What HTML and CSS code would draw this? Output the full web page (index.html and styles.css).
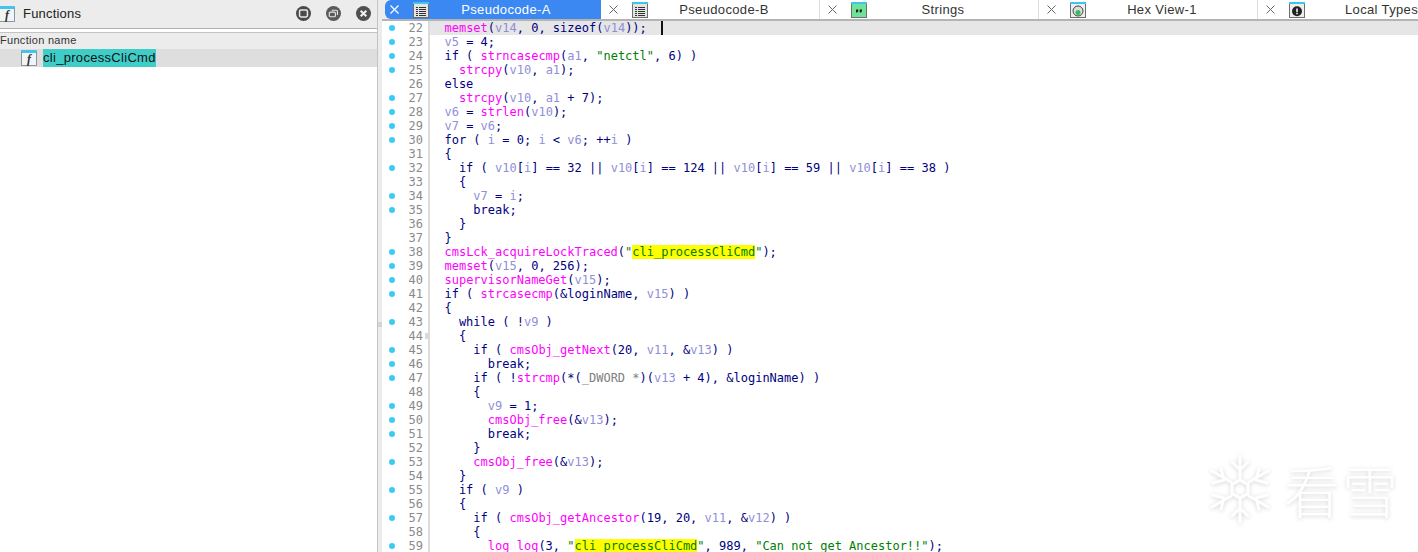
FILE: index.html
```html
<!DOCTYPE html>
<html lang="en">
<head>
<meta charset="utf-8">
<title>Pseudocode-A</title>
<link rel="stylesheet" href="styles.css">
</head>
<body>
<div class="app">
  <aside class="side">
    <header class="side-head">
      <span class="fn-icon fn-icon-big"><i>f</i></span>
      <span class="side-title">Functions</span>
      <span class="side-btns">
        <svg width="15" height="15" viewBox="0 0 16 16"><circle cx="8" cy="8" r="8" fill="#4a4a4a"/><rect x="3.8" y="4.300" width="8.400" height="7.400" rx="1.500" fill="none" stroke="#e8e8e8" stroke-width="1.600"/></svg>
        <svg width="15" height="15" viewBox="0 0 16 16"><circle cx="8" cy="8" r="8" fill="#5a5a5a"/><rect x="3.500" y="6.500" width="6.500" height="5" rx="1.200" fill="none" stroke="#e8e8e8" stroke-width="1.200"/><path d="M6 4.500h5a1.200 1.200 0 0 1 1.200 1.200v3.800" fill="none" stroke="#e8e8e8" stroke-width="1.200"/></svg>
        <svg width="15" height="15" viewBox="0 0 16 16"><circle cx="8" cy="8" r="8" fill="#4f4f4f"/><path d="M5 5l6 6M11 5l-6 6" stroke="#f0f0f0" stroke-width="2.200"/></svg>
      </span>
    </header>
    <div class="col-head">Function name</div>
    <div class="fn-row">
      <span class="fn-icon"><i>f</i></span>
      <span class="fn-name">cli_processCliCmd</span>
    </div>
  </aside>
  <div class="splitter"><span class="grip"></span></div>
  <main class="main">
    <nav class="tabs">
      <div class="tab tab-active">
        <svg class="tab-x" width="11" height="11" viewBox="0 0 11 11"><path d="M1.500 1.500l8 8M9.500 1.500l-8 8" stroke="#fff" stroke-width="1.200"/></svg>
        <svg class="tab-ic" width="16" height="16" viewBox="0 0 16 16" shape-rendering="crispEdges"><rect x=".5" y=".5" width="15" height="15" fill="#e4e4e4" stroke="#6f6f6f"/><rect width="16" height="2" fill="#3cc6ee"/><path d="M3 5.500h2M3 7.500h2M3 9.500h2M3 11.500h2M3 13.500h2M6 5.500h7M6 7.500h7M6 9.500h7M6 11.500h7M6 13.500h7" stroke="#333"/></svg>
        <span class="tab-label">Pseudocode-A</span>
      </div>
      <div class="tab">
        <svg class="tab-x" width="11" height="11" viewBox="0 0 11 11"><path d="M1.500 1.500l8 8M9.500 1.500l-8 8" stroke="#666" stroke-width="1"/></svg>
        <svg class="tab-ic" width="16" height="16" viewBox="0 0 16 16" shape-rendering="crispEdges"><rect x=".5" y=".5" width="15" height="15" fill="#e4e4e4" stroke="#6f6f6f"/><rect width="16" height="2" fill="#3cc6ee"/><path d="M3 5.500h2M3 7.500h2M3 9.500h2M3 11.500h2M3 13.500h2M6 5.500h7M6 7.500h7M6 9.500h7M6 11.500h7M6 13.500h7" stroke="#333"/></svg>
        <span class="tab-label">Pseudocode-B</span>
      </div>
      <div class="tab">
        <svg class="tab-x" width="11" height="11" viewBox="0 0 11 11"><path d="M1.500 1.500l8 8M9.500 1.500l-8 8" stroke="#666" stroke-width="1"/></svg>
        <svg class="tab-ic" width="16" height="16" viewBox="0 0 16 16"><rect x=".5" y=".5" width="15" height="15" fill="#6fe39a" stroke="#6f6f6f"/><rect width="16" height="2" fill="#3cc6ee"/><path d="M5 7.500h2.300v1.800l-1 1.200H5zM8.700 7.500H11v1.800l-1 1.200H8.700z" fill="#222"/></svg>
        <span class="tab-label">Strings</span>
      </div>
      <div class="tab">
        <svg class="tab-x" width="11" height="11" viewBox="0 0 11 11"><path d="M1.500 1.500l8 8M9.500 1.500l-8 8" stroke="#666" stroke-width="1"/></svg>
        <svg class="tab-ic" width="16" height="16" viewBox="0 0 16 16"><rect x=".5" y=".5" width="15" height="15" fill="#eee" stroke="#6f6f6f"/><rect width="16" height="2" fill="#3cc6ee"/><circle cx="8" cy="9" r="5" fill="#ddd" stroke="#444"/><circle cx="8" cy="10.500" r="2.500" fill="#2fbf5f"/></svg>
        <span class="tab-label">Hex View-1</span>
      </div>
      <div class="tab tab-last">
        <svg class="tab-x" width="11" height="11" viewBox="0 0 11 11"><path d="M1.500 1.500l8 8M9.500 1.500l-8 8" stroke="#666" stroke-width="1"/></svg>
        <svg class="tab-ic" width="16" height="16" viewBox="0 0 16 16"><rect x=".5" y=".5" width="15" height="15" fill="#eee" stroke="#6f6f6f"/><rect width="16" height="2" fill="#3cc6ee"/><circle cx="8" cy="9.300" r="5" fill="#222"/><path d="M8 6.500v3.800M8 11v1.300" stroke="#fff" stroke-width="1.500"/></svg>
        <span class="tab-label">Local Types</span>
      </div>
    </nav>
    <div class="code">
      <div class="ln cur"><b class="d"></b><u>22</u><code>  <a>memset</a>(<s>v14</s>, 0, sizeof(<s>v14</s>));  <span class="caret"></span></code></div>
      <div class="ln"><b class="d"></b><u>23</u><code>  <s>v5</s> = 4;</code></div>
      <div class="ln"><b class="d"></b><u>24</u><code>  if ( <a>strncasecmp</a>(<s>a1</s>, <em>"netctl"</em>, 6) )</code></div>
      <div class="ln"><b class="d"></b><u>25</u><code>    <a>strcpy</a>(<s>v10</s>, <s>a1</s>);</code></div>
      <div class="ln"><b></b><u>26</u><code>  else</code></div>
      <div class="ln"><b class="d"></b><u>27</u><code>    <a>strcpy</a>(<s>v10</s>, <s>a1</s> + 7);</code></div>
      <div class="ln"><b class="d"></b><u>28</u><code>  <s>v6</s> = <a>strlen</a>(<s>v10</s>);</code></div>
      <div class="ln"><b class="d"></b><u>29</u><code>  <s>v7</s> = <s>v6</s>;</code></div>
      <div class="ln"><b class="d"></b><u>30</u><code>  for ( <s>i</s> = 0; <s>i</s> &lt; <s>v6</s>; ++<s>i</s> )</code></div>
      <div class="ln"><b></b><u>31</u><code>  {</code></div>
      <div class="ln"><b class="d"></b><u>32</u><code>    if ( <s>v10</s>[<s>i</s>] == 32 || <s>v10</s>[<s>i</s>] == 124 || <s>v10</s>[<s>i</s>] == 59 || <s>v10</s>[<s>i</s>] == 38 )</code></div>
      <div class="ln"><b></b><u>33</u><code>    {</code></div>
      <div class="ln"><b class="d"></b><u>34</u><code>      <s>v7</s> = <s>i</s>;</code></div>
      <div class="ln"><b class="d"></b><u>35</u><code>      break;</code></div>
      <div class="ln"><b></b><u>36</u><code>    }</code></div>
      <div class="ln"><b></b><u>37</u><code>  }</code></div>
      <div class="ln"><b class="d"></b><u>38</u><code>  <a>cmsLck_acquireLockTraced</a>(<em>"<mark>cli_processCliCmd</mark>"</em>);</code></div>
      <div class="ln"><b class="d"></b><u>39</u><code>  <a>memset</a>(<s>v15</s>, 0, 256);</code></div>
      <div class="ln"><b class="d"></b><u>40</u><code>  <a>supervisorNameGet</a>(<s>v15</s>);</code></div>
      <div class="ln"><b class="d"></b><u>41</u><code>  if ( <a>strcasecmp</a>(&amp;loginName, <s>v15</s>) )</code></div>
      <div class="ln"><b></b><u>42</u><code>  {</code></div>
      <div class="ln"><b class="d"></b><u>43</u><code>    while ( !<s>v9</s> )</code></div>
      <div class="ln"><b></b><u>44</u><code>    {</code></div>
      <div class="ln"><b class="d"></b><u>45</u><code>      if ( <a>cmsObj_getNext</a>(20, <s>v11</s>, &amp;<s>v13</s>) )</code></div>
      <div class="ln"><b class="d"></b><u>46</u><code>        break;</code></div>
      <div class="ln"><b class="d"></b><u>47</u><code>      if ( !<a>strcmp</a>(*(<var>_DWORD *</var>)(<s>v13</s> + 4), &amp;loginName) )</code></div>
      <div class="ln"><b></b><u>48</u><code>      {</code></div>
      <div class="ln"><b class="d"></b><u>49</u><code>        <s>v9</s> = 1;</code></div>
      <div class="ln"><b class="d"></b><u>50</u><code>        <a>cmsObj_free</a>(&amp;<s>v13</s>);</code></div>
      <div class="ln"><b class="d"></b><u>51</u><code>        break;</code></div>
      <div class="ln"><b></b><u>52</u><code>      }</code></div>
      <div class="ln"><b class="d"></b><u>53</u><code>      <a>cmsObj_free</a>(&amp;<s>v13</s>);</code></div>
      <div class="ln"><b></b><u>54</u><code>    }</code></div>
      <div class="ln"><b class="d"></b><u>55</u><code>    if ( <s>v9</s> )</code></div>
      <div class="ln"><b></b><u>56</u><code>    {</code></div>
      <div class="ln"><b class="d"></b><u>57</u><code>      if ( <a>cmsObj_getAncestor</a>(19, 20, <s>v11</s>, &amp;<s>v12</s>) )</code></div>
      <div class="ln"><b></b><u>58</u><code>      {</code></div>
      <div class="ln"><b class="d"></b><u>59</u><code>        <a>log_log</a>(3, <em>"<mark>cli_processCliCmd</mark>"</em>, 989, <em>"Can not get Ancestor!!"</em>);</code></div>
    </div>
    <span class="gutter-grip"></span>
    <div class="watermark">
      <svg width="64" height="72" viewBox="0 0 64 72"><g fill="none" stroke="#fff" stroke-width="3" stroke-linecap="round"><path d="M32 3v22M32 47v22M4 18l19 11M41 43l19 11M4 54l19-11M41 29l19-11"/><path d="M24 9l8 8 8-8M24 63l8-8 8 8M5 30l11-3-3-11M59 30l-11-3 3-11M5 42l11 3-3 11M59 42l-11 3 3 11"/><path d="M32 27l8 4.500v9L32 45l-8-4.500v-9z"/></g></svg>
      <span class="wm-text">看雪</span>
    </div>
  </main>
</div>
</body>
</html>
```

FILE: styles.css
```css
* { box-sizing: border-box; }
html, body { margin: 0; height: 100%; overflow: hidden; background: #fff; }
body { font-family: "Liberation Sans", Arial, sans-serif; }
.app { display: flex; height: 552px; width: 1418px; }

.side { width: 378px; flex: none; background: #fff; border-right: 1px solid #c4c4c4; }
.side-head { height: 29px; padding-bottom: 1px; display: flex; align-items: center; background: #ececec; border-bottom: 1px solid #b0b0b0; margin-bottom: 3px; }
.side-title { font-size: 13px; color: #222; margin-left: 8px; letter-spacing: .2px; }
.side-btns { margin-left: auto; display: flex; gap: 15px; padding-right: 6px; }
.col-head { height: 17px; background: #ececec; border-top: 1px solid #c4c4c4; font-size: 11px; color: #333; line-height: 15px; letter-spacing: .3px; }
.fn-row { height: 18px; background: #dedede; display: flex; align-items: center; padding-left: 21px; }
.fn-name { margin-left: 6px; background: #3fcdc8; font-size: 13px; line-height: 18px; color: #111; letter-spacing: .3px; }

.fn-icon { width: 16px; height: 16px; border: 1px solid #8d949c; border-top: 3px solid #45c3ea; background: #f2f5f8; display: flex; align-items: center; justify-content: center; font-family: "Liberation Serif", serif; font-size: 12px; font-weight: bold; line-height: 1; color: #333; border-radius: 1px; }
.fn-icon-big { margin: 0 0 0 -1px; }

.splitter { width: 4px; flex: none; background: #ececec; position: relative; }
.grip { position: absolute; left: 0; top: 322px; width: 4px; height: 5px; background: #d4d4d4; }

.main { position: relative; flex: 1; min-width: 0; overflow: hidden; }
.tabs { display: flex; height: 21px; padding-left: 3px; border-bottom: 2px solid #b4b4b4; background: #ececec; }
.tab { width: 219px; flex: none; display: flex; align-items: center; padding: 0 19px 0 7px; background: #fff; border-right: 1px solid #ddd; font-size: 13px; color: #333; }
.tab-x { flex: none; }
.tab-ic { margin-left: 13px; flex: none; }
.tab-label { flex: 1; text-align: center; letter-spacing: .35px; white-space: nowrap; }
.tab-active { width: 216px; padding: 0 18px 0 4px; background: #3b88f2; color: #fff; border-radius: 6px 0 0 6px; border-right: none; }
.tab-last { border-right: none; }

.code { font-family: "DejaVu Sans Mono", monospace; font-size: 12px; line-height: 14px; color: #000080; }
.ln { display: flex; height: 14px; white-space: pre; }
.ln b { width: 6px; height: 6px; margin: 4px 0 0 7px; border-radius: 50%; flex: none; }
.ln b.d { background: #3ccbf5; }
.ln u { width: 28px; text-align: right; flex: none; text-decoration: none; color: #8a8a8a; }
.ln code { font: inherit; display: block; flex: 1; border-left: 2px solid #dcdcdc; margin-left: 5px; }
.cur code { background: #e6e6e6; }
.ln a { color: #ff00ff; }
.ln s { text-decoration: none; color: #8f8fd8; }
.ln em { font-style: normal; color: #008000; }
.ln mark { background: #ffff00; color: #008000; }
.ln var { font-style: normal; color: #808080; }
.caret { display: inline-block; width: 2px; height: 14px; background: #111; vertical-align: top; }

.gutter-grip { position: absolute; left: 43px; top: 333px; width: 3px; height: 6px; background: #d8d8d8; }

.watermark { position: absolute; right: 18px; top: 453px; display: flex; align-items: center; gap: 12px; filter: drop-shadow(0 1px 2px rgba(0,0,0,.16)); }
.wm-text { font-family: "Noto Sans CJK SC", sans-serif; font-weight: 300; font-size: 56px; line-height: 64px; color: #fff; letter-spacing: 2px; }
```
